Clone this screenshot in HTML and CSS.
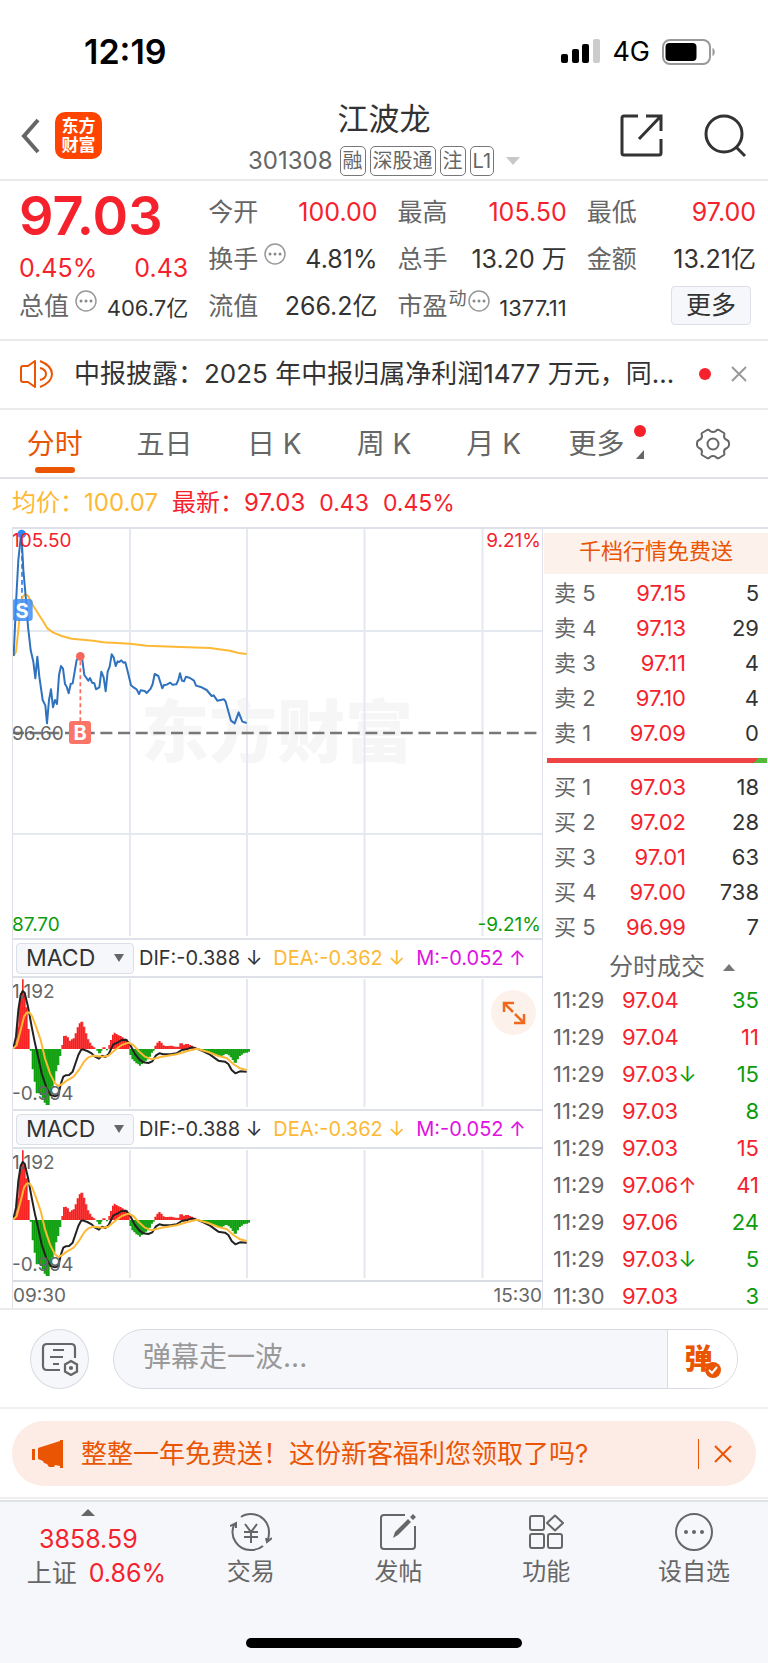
FILE: index.html
```html
<!DOCTYPE html>
<html lang="zh-CN">
<head>
<meta charset="utf-8">
<meta name="viewport" content="width=device-width, initial-scale=1">
<title>江波龙 301308</title>
<link rel="stylesheet" href="styles.css">
</head>
<body>
<div class="status">
  <time class="clock">12:19</time>
  <div class="signals">
    <svg width="39" height="25" viewBox="0 0 39 25" aria-hidden="true"><rect x="0" y="15" width="7" height="9" rx="2"/><rect x="11" y="10" width="7" height="14" rx="2"/><rect x="21" y="5" width="7" height="19" rx="2"/><rect x="32" y="0" width="7" height="24" rx="2" fill="#ccc"/></svg>
    <span class="network">4G</span>
    <svg width="54" height="26" viewBox="0 0 54 26" aria-hidden="true"><rect x="1" y="1" width="47" height="24" rx="7" fill="none" stroke="#999" stroke-width="2"/><rect x="3.500" y="4" width="31" height="18" rx="4"/><path d="M50.500 9c3 1 3 7 0 8z" fill="#999"/></svg>
  </div>
</div>

<header class="header">
  <div class="header-left">
    <button class="icon-button" type="button" aria-label="返回"><svg width="22" height="36" viewBox="0 0 22 36"><path d="M18 2 4 18l14 16" fill="none" stroke="#666" stroke-width="4"/></svg></button>
    <div class="logo"><span>东方</span><span>财富</span></div>
  </div>
  <div class="header-mid">
    <h1 class="title">江波龙</h1>
    <div class="code-row">
      <span class="code">301308</span>
      <span class="tag">融</span><span class="tag">深股通</span><span class="tag">注</span><span class="tag">L1</span>
      <svg class="code-arrow" width="14" height="8" viewBox="0 0 14 8"><path d="M0 0h14L7 8z" fill="#c8c8c8"/></svg>
    </div>
  </div>
  <div class="header-right">
    <button class="icon-button" type="button" aria-label="分享"><svg width="44" height="44" viewBox="0 0 44 44" fill="none" stroke="#333" stroke-width="3"><path d="M18 2H4Q2 2 2 4v35q0 2 2 2h35q2 0 2-2V25M26 2h15v15M40 3 19 25"/></svg></button>
    <button class="icon-button" type="button" aria-label="搜索"><svg width="44" height="44" viewBox="0 0 44 44" fill="none" stroke="#333" stroke-width="3"><circle cx="20" cy="20" r="18"/><path d="m32 33 9 9"/></svg></button>
  </div>
</header>

<section class="quote">
  <div class="price-cell">
    <strong class="price">97.03</strong>
    <div class="change"><span>0.45%</span><span>0.43</span></div>
  </div>
  <div class="stat"><span>今开</span><b class="red">100.00</b></div>
  <div class="stat"><span>最高</span><b class="red">105.50</b></div>
  <div class="stat"><span>最低</span><b class="red">97.00</b></div>
  <div class="stat"><span class="with-dots">换手<svg class="dots" viewBox="0 0 22 22"><circle cx="11" cy="11" r="10" fill="none" stroke="#999" stroke-width="1.500"/><g fill="#888"><circle cx="6" cy="11" r="1.500"/><circle cx="11" cy="11" r="1.500"/><circle cx="16" cy="11" r="1.500"/></g></svg></span><b>4.81%</b></div>
  <div class="stat"><span>总手</span><b>13.20 万</b></div>
  <div class="stat"><span>金额</span><b>13.21亿</b></div>
  <div class="stat"><span class="with-dots">总值<svg class="dots" viewBox="0 0 22 22"><circle cx="11" cy="11" r="10" fill="none" stroke="#999" stroke-width="1.500"/><g fill="#888"><circle cx="6" cy="11" r="1.500"/><circle cx="11" cy="11" r="1.500"/><circle cx="16" cy="11" r="1.500"/></g></svg></span><b class="small">406.7亿</b></div>
  <div class="stat"><span>流值</span><b>266.2亿</b></div>
  <div class="stat"><span class="with-dots tight">市盈<sup>动</sup><svg class="dots" viewBox="0 0 22 22"><circle cx="11" cy="11" r="10" fill="none" stroke="#999" stroke-width="1.500"/><g fill="#888"><circle cx="6" cy="11" r="1.500"/><circle cx="11" cy="11" r="1.500"/><circle cx="16" cy="11" r="1.500"/></g></svg></span><b class="small">1377.11</b></div>
  <div class="stat end"><button class="more" type="button">更多</button></div>
</section>

<section class="news">
  <svg width="34" height="28" viewBox="0 0 34 28" fill="none" stroke="#ea5504" stroke-width="2" stroke-linejoin="round" aria-hidden="true"><path d="M15 1v26l-7-5H3q-2 0-2-2V8q0-2 2-2h5zM20 1c5 2 12 6 12 13s-7 11-12 13M20 8c8 2 8 10 0 12"/></svg>
  <a class="news-text" href="#">中报披露：2025 年中报归属净利润1477 万元，同...</a>
  <span class="dot"></span>
  <button class="icon-button" type="button" aria-label="关闭"><svg width="18" height="18" viewBox="0 0 18 18"><path d="m2 2 14 14M16 2 2 16" stroke="#999" stroke-width="2"/></svg></button>
</section>

<nav class="tabs">
  <button class="tab active" type="button">分时</button>
  <button class="tab" type="button">五日</button>
  <button class="tab" type="button">日 K</button>
  <button class="tab" type="button">周 K</button>
  <button class="tab" type="button">月 K</button>
  <button class="tab more-tab" type="button">更多<span class="tab-mark"><i class="dot"></i><svg width="8" height="9" viewBox="0 0 8 9"><path d="M8 0v9H0z" fill="#666"/></svg></span></button>
  <button class="tab" type="button" aria-label="设置"><svg width="34" height="32" viewBox="0 0 34 32" fill="none" stroke="#666" stroke-width="2" stroke-linejoin="round"><path d="M11 2q2-1 3 1 3 2 6 0 1-2 3-1l5 3q1 1 0 3 0 3 3 4 2 1 2 3v2q0 2-2 3-3 1-3 4 1 2 0 3l-5 3q-2 1-3-1-3-2-6 0-1 2-3 1l-5-3q-1-1 0-3 0-3-3-4-2-1-2-3v-2q0-2 2-3 3-1 3-4-1-2 0-3z"/><circle cx="17" cy="16" r="5.500"/></svg></button>
</nav>

<div class="legend"><span class="gold">均价：100.07</span><span>最新：97.03</span><span>0.43</span><span>0.45%</span></div>

<main class="board">
  <section class="charts">
    <svg class="chart" viewBox="1 2 529 409" role="img" aria-label="分时走势">
      <text x="129" y="230" font-size="68" font-weight="900" fill="#f6f6f6">东方财富</text>
      <g stroke="#e4e8ef" stroke-width="2"><path d="M0 104h530M118 2v407M235 2v407M352.500 2v407M470.500 2v407M0 307h530"/></g>
      <path d="M0 206h530" stroke="#777" stroke-width="2.500" stroke-dasharray="12 5.670"/>
      <g transform="translate(-12 -7) scale(.33333)" fill="none" stroke-linejoin="round">
        <path d="M66 36V237" stroke="#4b93f5" stroke-width="6" stroke-dasharray="14 10"/>
        <path d="M41 408 48 395 55 330 62 260 68 230 75 223 83 226 100 258 130 305 142 325 160 338 185 348 215 356 280 362 310 367 390 371 440 377 520 380 630 384 690 392 715 399 740 402" stroke="#fdb935" stroke-width="6"/>
        <path d="M41 408 48 250 55 120 64 36 70 150 78 240 84 320 92 390 100 425 106 475 112 410 118 470 128 540 136 556 141 610 147 540 153 508 159 562 165 540 171 552 177 465 183 438 189 446 195 492 200 500 206 520 212 492 218 490 224 455 230 420 236 412 247 420 253 465 265 482 270 474 276 488 283 490 288 508 298 502 304 455 311 472 317 514 323 455 329 440 335 403 341 412 347 438 353 424 358 426 364 421 370 428 376 427 382 450 393 496 402 503 410 508 417 522 422 511 434 513 440 519 452 506 458 492 464 462 475 468 487 505 492 495 500 494 511 488 517 494 529 493 535 480 540 460 546 482 552 484 558 470 570 474 582 482 588 497 605 502 620 510 635 528 641 526 652 542 672 538 677 545 693 602 704 610 716 577 727 605 740 609" stroke="#2f72bd" stroke-width="6"/>
        <circle cx="65" cy="42" r="13" fill="#2f86f5"/>
        <path d="M241 424v180" stroke="#fb6a5a" stroke-width="5" stroke-dasharray="12 9"/>
        <circle cx="241" cy="409" r="13" fill="#f4675a"/>
        <rect x="37" y="237" width="61" height="66" rx="10" fill="#3c8df7" fill-opacity=".85"/>
      </g>
      <g font-size="19">
        <text x="0" y="20" fill="#f5222d">105.50</text>
        <text x="529" y="20" fill="#f5222d" text-anchor="end">9.21%</text>
        <text x="0" y="213" fill="#666">96.60</text>
        <text x="0" y="404" fill="#0c9c0c">87.70</text>
        <text x="529" y="404" fill="#0c9c0c" text-anchor="end">-9.21%</text>
      </g>
      <rect x="57" y="194" width="22" height="23" rx="3" fill="#fb7566"/>
      <g font-size="20" font-weight="700" fill="#fff" text-anchor="middle"><text x="10" y="91">S</text><text x="68" y="213">B</text></g>
    </svg>

    <div class="indicator">
      <span class="picker"><select class="picker-select" aria-label="指标一"><option>MACD</option></select><svg class="picker-arrow" viewBox="0 0 10 8"><path d="M0 0h10L5 8z" fill="#666"/></svg></span>
      <span>DIF:-0.388 ↓</span><span class="gold">DEA:-0.362 ↓</span><span class="magenta">M:-0.052 ↑</span>
    </div>
    <div class="plot">
      <svg class="chart" viewBox="1 2 529 131" role="img" aria-label="MACD">
        <defs>
          <pattern id="redBars" width="5.860" height="600" patternUnits="userSpaceOnUse" x="43.500"><rect width="5.860" height="600" fill="#ff7070"/><rect width="4.800" height="600" fill="#f71c1c"/></pattern>
          <pattern id="greenBars" width="5.860" height="600" patternUnits="userSpaceOnUse" x="43.500"><rect width="5.860" height="600" fill="#55bb55"/><rect width="4.800" height="600" fill="#0a9d0a"/></pattern>
          <g id="macd">
            <path d="M118 3v128M235 3v128M352.500 3v128M470.500 3v128" stroke="#e4e8ef" stroke-width="2"/>
            <g transform="translate(-12 -46) scale(.33333)" fill="none" stroke-linejoin="round">
              <path fill="url(#redBars)" d="M43 357V340h6V290h6V230h5V190h6V148h5V190h6V232h6V297h6V357zM184 357V345h5V318h6V317h6V322h6V332h6V328h5V325h6V310h6V292h6V280h5V275h9V290h6V310h6V328h6V338h6V347h6V352h6V357zM307 357V352h10V357zM325 357V345h5V330h6V314h5V308h6V312h6V316h6V318h6V322h6V326h6V328h6V340h6V357zM463 357V347h6V338h6V333h7V338h6V346h6V348h12V347h12V349h6V350h14V340h11V344h6V342h12V345h6V347h6V350h8V357z"/>
              <path fill="url(#greenBars)" d="M89 357V362h6V418h6V455h6V490h12V495h6V505h6V518h6V525h12V497h6V470h6V455h5V424h6V405h6V378h6V357zM289 357V362h5V370h10V362h3V357zM318 357v4h6v-4zM388 357V375h6V388h6V394h6V400h6V403h5V407h6V402h6V396h6V392h6V388h6V380h6V368h6V362h5V357zM590 357V360h12V362h12V365h12V369h12V374h12V378h12V380h6V376h6V372h9V376h6V382h6V390h6V398h10V388h6V378h6V374h6V370h6V368h9V365h6V357z"/>
              <path stroke="#222" stroke-width="6" d="M40 355 48 320 55 240 62 195 68 183 74 188 84 230 95 290 105 340 112 370 125 430 140 475 152 495 165 499 175 495 183 460 190 440 197 436 207 435 218 425 235 375 243 360 248 358 262 363 275 370 285 380 297 386 306 377 316 381 326 372 340 343 352 338 365 330 378 329 388 340 405 372 418 388 430 397 445 399 457 394 468 376 478 370 490 373 515 372 530 370 545 360 560 358 575 352 590 356 610 364 630 374 655 392 675 395 685 402 695 420 706 430 720 424 740 425"/>
              <path stroke="#fdb935" stroke-width="6" d="M40 355 50 345 62 300 72 260 80 248 88 247 96 258 108 290 122 330 135 385 150 430 165 460 175 468 187 462 200 452 220 441 238 418 252 395 265 382 280 377 310 380 325 377 345 360 365 345 385 338 400 345 415 362 435 380 455 388 485 380 530 373 560 364 590 356 625 366 655 378 680 384 700 402 720 415 740 420"/>
            </g>
            <g font-size="19" fill="#666"><text x="0" y="22">1.192</text><text x="0" y="124">-0.994</text></g>
          </g>
        </defs>
        <use href="#macd"/>
      </svg>
      <button class="expand" type="button" aria-label="全屏"><svg width="24" height="24" viewBox="0 0 24 24" fill="none" stroke="#ef6a1c" stroke-width="2.500"><path d="M2 11V2h10M2 2l9 9M22 13v9H12M22 22l-9-9"/></svg></button>
    </div>
    <div class="indicator">
      <span class="picker"><select class="picker-select" aria-label="指标二"><option>MACD</option></select><svg class="picker-arrow" viewBox="0 0 10 8"><path d="M0 0h10L5 8z" fill="#666"/></svg></span>
      <span>DIF:-0.388 ↓</span><span class="gold">DEA:-0.362 ↓</span><span class="magenta">M:-0.052 ↑</span>
    </div>
    <div class="plot">
      <svg class="chart" viewBox="1 2 529 131" role="img" aria-label="MACD"><use href="#macd"/></svg>
    </div>
    <div class="times"><span>09:30</span><span>15:30</span></div>
  </section>

  <aside class="depth">
    <a class="promo" href="#">千档行情免费送</a>
    <table class="orders">
      <tr><th>卖 5</th><td>97.15</td><td>5</td></tr>
      <tr><th>卖 4</th><td>97.13</td><td>29</td></tr>
      <tr><th>卖 3</th><td>97.11</td><td>4</td></tr>
      <tr><th>卖 2</th><td>97.10</td><td>4</td></tr>
      <tr><th>卖 1</th><td>97.09</td><td>0</td></tr>
    </table>
    <div class="ratio"></div>
    <table class="orders">
      <tr><th>买 1</th><td>97.03</td><td>18</td></tr>
      <tr><th>买 2</th><td>97.02</td><td>28</td></tr>
      <tr><th>买 3</th><td>97.01</td><td>63</td></tr>
      <tr><th>买 4</th><td>97.00</td><td>738</td></tr>
      <tr><th>买 5</th><td>96.99</td><td>7</td></tr>
    </table>
    <button class="ticks-title" type="button">分时成交<svg width="12" height="7" viewBox="0 0 12 7"><path d="M0 7h12L6 0z" fill="#777"/></svg></button>
    <table class="ticks">
      <tr><th>11:29</th><td>97.04</td><td class="green">35</td></tr>
      <tr><th>11:29</th><td>97.04</td><td>11</td></tr>
      <tr><th>11:29</th><td>97.03<span class="green">↓</span></td><td class="green">15</td></tr>
      <tr><th>11:29</th><td>97.03</td><td class="green">8</td></tr>
      <tr><th>11:29</th><td>97.03</td><td>15</td></tr>
      <tr><th>11:29</th><td>97.06↑</td><td>41</td></tr>
      <tr><th>11:29</th><td>97.06</td><td class="green">24</td></tr>
      <tr><th>11:29</th><td>97.03<span class="green">↓</span></td><td class="green">5</td></tr>
      <tr><th>11:30</th><td>97.03</td><td class="green">3</td></tr>
    </table>
  </aside>
</main>

<section class="chat">
  <button class="round" type="button" aria-label="弹幕设置"><svg width="38" height="34" viewBox="0 0 38 34" fill="none" stroke="#666" stroke-width="2.200"><path d="M19 28H6q-4 0-4-4V6q0-4 4-4h24q4 0 4 4v10M12 8h11M9 15h13M12 22h6"/><path d="m30 19 6 3.500v7L30 33l-6-3.500v-7z"/><circle cx="30" cy="26" r="1" /></svg></button>
  <div class="composer">
    <input class="message" type="text" placeholder="弹幕走一波..." aria-label="弹幕">
    <button class="barrage" type="button">弹<svg width="16" height="16" viewBox="0 0 16 16"><circle cx="8" cy="8" r="8" fill="#ea5504"/><path d="m4 8 3 3 5-6" fill="none" stroke="#fff" stroke-width="2"/></svg></button>
  </div>
</section>

<section class="offer-wrap">
  <div class="offer">
    <svg width="32" height="28" viewBox="0 0 32 28" fill="#ea5504" aria-hidden="true"><path d="M0 9h3v11H0zM6 8 28 1V0h3v28h-3v-2l-5-1-1 2h-5l-2-3-3-1-1-2-5-2z"/></svg>
    <a class="offer-text" href="#">整整一年免费送！这份新客福利您领取了吗?</a>
    <button class="offer-close" type="button" aria-label="关闭"><svg width="18" height="18" viewBox="0 0 18 18"><path d="m1 1 16 16M17 1 1 17" stroke="#ea5504" stroke-width="2"/></svg></button>
  </div>
</section>

<footer class="bottom">
  <nav class="dock">
    <a class="index" href="#"><svg width="14" height="7" viewBox="0 0 14 7"><path d="M0 7h14L7 0z" fill="#666"/></svg><span class="red">3858.59</span><span class="index-row">上证<b class="red">0.86%</b></span></a>
    <a class="dock-item" href="#"><svg width="42" height="38" viewBox="0 0 42 38" fill="none" stroke="#666" stroke-width="2"><path d="M11 4Q15 1 21 1a18 18 0 0 1 18 18q0 4-1 8l-1 2M42 25l-5 4-1-4M33 33q-5 4-12 4A18 18 0 0 1 4 12l1-1M0 13l6-3 0 5M15 11l6 8 6-8M14 19h14M14 24h14M21 19v11"/></svg><span>交易</span></a>
    <a class="dock-item" href="#"><svg width="38" height="38" viewBox="0 0 38 38" fill="none" stroke="#666" stroke-width="2"><path d="M26 2H5Q2 2 2 5v28q0 3 3 3h28q3 0 3-3V13"/><path d="m14 25 2-6L29 6l3 3-13 13zM31 4l3-3 3 3-3 3z" fill="#666" stroke="none"/></svg><span>发帖</span></a>
    <a class="dock-item" href="#"><svg width="36" height="36" viewBox="0 0 36 36" fill="none" stroke="#666" stroke-width="2"><rect x="2" y="2" width="14" height="14" rx="2"/><rect x="2" y="20" width="14" height="14" rx="2"/><rect x="20" y="20" width="14" height="14" rx="2"/><path d="M27 1.500 35 9l-8 7.500L19 9z" stroke-linejoin="round"/></svg><span>功能</span></a>
    <a class="dock-item" href="#"><svg width="38" height="38" viewBox="0 0 38 38" fill="none" stroke="#666" stroke-width="2"><circle cx="19" cy="19" r="18"/><g fill="#666" stroke="none"><circle cx="11" cy="19" r="2"/><circle cx="19" cy="19" r="2"/><circle cx="27" cy="19" r="2"/></g></svg><span>设自选</span></a>
  </nav>
  <div class="home"></div>
</footer>
</body>
</html>
```
FILE: styles.css
```css
* { box-sizing: border-box; }
body {
  margin: 0;
  background: #fff;
  color: #333;
  font-family: Inter, "Noto Sans CJK SC", sans-serif;
  font-size: 24px;
  line-height: 32px;
}
button, input, select { font: inherit; color: inherit; margin: 0; }
button { background: none; border: 0; padding: 0; }
a { color: inherit; text-decoration: none; }
b, th { font-weight: 400; }
svg { display: block; flex: none; }
table { border-collapse: collapse; width: 100%; table-layout: fixed; }
.red { color: #f5222d; }
.green { color: #0c9c0c; }
.gold { color: #fdb935; }
.magenta { color: #e012e0; }

.status {
  display: flex;
  justify-content: space-between;
  align-items: center;
  height: 100px;
  padding: 3px 52px 0 84px;
  color: #000;
}
.clock { font-size: 34px; font-weight: 600; }
.signals { display: flex; align-items: center; gap: 12px; }
.network { font-size: 27px; }

.header {
  display: grid;
  grid-template-columns: 1fr auto 1fr;
  height: 81px;
  padding: 0 20px;
  border-bottom: 2px solid #ebebeb;
}
.header-left, .header-right { display: flex; align-items: center; padding-bottom: 8px; }
.header-left { gap: 13px; }
.header-right { justify-content: flex-end; gap: 40px; }
.icon-button { flex: none; }
.logo {
  display: grid;
  align-content: center;
  justify-items: center;
  width: 47px;
  height: 47px;
  border-radius: 10px;
  background: #ff4400;
  color: #fff;
  font-size: 17px;
  font-weight: 700;
  line-height: 19px;
}
.header-mid { display: flex; flex-direction: column; align-items: center; }
.title { margin: 0; font-size: 31px; font-weight: 400; line-height: 38px; padding-bottom: 8px; }
.code-row { display: flex; align-items: center; gap: 4px; height: 30px; color: #666; font-size: 20px; }
.code { font-size: 24px; padding-right: 3px; }
.tag { border: 1px solid #777; border-radius: 5px; padding: 0 2px; line-height: 28px; }
.code-arrow { margin-left: 8px; }

.quote {
  display: grid;
  grid-template-columns: repeat(4, 1fr);
  grid-template-rows: repeat(3, 47px);
  column-gap: 20px;
  padding: 7px 12px 10px 19px;
  border-bottom: 2px solid #ebebeb;
}
.price-cell { grid-row: span 2; color: #f5222d; }
.price { display: block; font-size: 54px; font-weight: 600; line-height: 56px; }
.change { display: flex; justify-content: space-between; font-size: 25px; line-height: 48px; }
.stat { display: flex; align-items: center; justify-content: space-between; white-space: nowrap; color: #666; font-size: 25px; }
.stat b { color: #333; font-size: 25px; }
.stat b.red { color: #f5222d; }
.stat b.small { font-size: 22px; padding-top: 4px; }
.stat.end { justify-content: flex-end; padding-right: 5px; }
.with-dots { display: flex; gap: 6px; }
.with-dots.tight { gap: 1px; }
.with-dots sup { font-size: 18px; line-height: 18px; }
.dots { width: 22px; height: 22px; }
.more { height: 39px; padding: 0 14px; border: 1px solid #dcdfe8; border-radius: 4px; background: #f6f7fa; color: #333; line-height: 35px; }

.news {
  display: flex;
  align-items: center;
  height: 69px;
  padding: 0 20px 2px;
  border-bottom: 2px solid #ebebeb;
}
.news-text {
  flex: 1;
  min-width: 0;
  white-space: nowrap;
  margin: 0 18px 0 20px;
  font-size: 26px;
  line-height: 40px;
}
.dot { flex: none; width: 12px; height: 12px; border-radius: 50%; background: #f5222d; }
.news .icon-button { margin-left: 19px; }

.tabs {
  display: grid;
  grid-template-columns: repeat(7, 1fr);
  height: 69px;
  border-bottom: 2px solid #dfe1e6;
}
.tab { position: relative; display: flex; align-items: center; justify-content: center; color: #666; font-size: 28px; white-space: pre; }
.tab.active { color: #ea5504; }
.tab.active::after {
  content: "";
  position: absolute;
  bottom: 4px;
  left: calc(50% - 20px);
  width: 40px;
  height: 6px;
  border-radius: 3px;
  background: #ea5504;
}
.more-tab { padding-left: 8px; }
.tab-mark { display: grid; gap: 13px; justify-items: center; margin-left: 10px; padding-bottom: 4px; }

.legend { display: flex; gap: 14px; padding: 8px 12px; height: 48px; color: #f5222d; }
.legend span:nth-child(n+3) { font-size: 23px; }

.board {
  display: grid;
  grid-template-columns: minmax(0, 531fr) minmax(0, 225fr);
  padding-left: 12px;
  border-bottom: 2px solid #ebebeb;
}
.charts { border: 1px solid #dfe1e8; border-width: 2px 1px 0; }
.chart { width: 100%; height: auto; overflow: hidden; }
.chart text { font-family: Inter, "Noto Sans CJK SC", sans-serif; }
.indicator {
  display: flex;
  align-items: center;
  height: 40px;
  padding-left: 3px;
  border: 1px solid #dfe1e8;
  border-width: 2px 0;
  font-size: 20px;
  white-space: pre;
}
.indicator > span { padding-right: 11px; }
.indicator > .picker { position: relative; height: 31px; margin-right: 5px; padding: 0; }
.picker-select {
  display: block;
  appearance: none;
  width: 118px;
  height: 31px;
  padding: 0 9px;
  border: 1px solid #dcdfe8;
  border-radius: 4px;
  background: #f6f7fa;
  font-size: 23px;
  line-height: 28px;
}
.picker-arrow { position: absolute; right: 10px; top: 11px; width: 10px; height: 8px; pointer-events: none; }
.plot { position: relative; }
.expand {
  position: absolute;
  top: 12px;
  right: 6px;
  display: grid;
  place-items: center;
  width: 45px;
  height: 45px;
  border-radius: 50%;
  background: #fdf1eb;
}
.times { display: flex; justify-content: space-between; border-top: 2px solid #d8dbe2; height: 28px; font-size: 19px; line-height: 28px; color: #666; }

.depth { border-top: 2px solid #dfe1e8; padding: 4px 0 0 1px; min-width: 0; }
.promo { display: block; height: 41px; background: #fdf1eb; color: #ea5504; font-size: 22px; line-height: 36px; text-align: center; }
.orders, .ticks { font-size: 22px; line-height: 24px; }
.orders { margin-top: 1px; }
.orders tr { height: 35px; }
.orders th, .orders td { padding: 0; width: 71px; }
.orders th { padding-left: 10px; text-align: left; color: #666; }
.orders td { color: #f5222d; text-align: right; }
.orders td:last-child { width: auto; color: #333; padding-right: 9px; }
.ratio { height: 5px; margin: 8px 1px 6px 3px; background: linear-gradient(135deg, #ee4444 94%, #55b83a 94%); }
.ticks-title { display: flex; align-items: center; gap: 18px; height: 16px; margin: 15px 0 0 65px; font-size: 24px; line-height: 16px; color: #666; }
.ticks th, .ticks td { padding: 13px 0 0; height: 37px; text-align: left; color: #f5222d; }
.ticks th { width: 78px; padding-left: 9px; color: #666; }
.ticks td { width: 80px; }
.ticks td:last-child { width: auto; padding-right: 9px; text-align: right; }
.ticks td.green { color: #0c9c0c; }

.chat { display: flex; gap: 24px; padding: 19px 30px 18px; border-bottom: 2px solid #f0f0f0; }
.round { flex: none; display: grid; place-items: center; width: 59px; height: 60px; border: 1px solid #d8dbe2; border-radius: 50%; background: #f6f7fa; }
.composer { flex: 1; display: flex; min-width: 0; border: 1px solid #d8dbe2; border-radius: 30px; overflow: hidden; background: #f6f7fa; }
.message { flex: 1; min-width: 0; border: 0; padding: 0 29px 4px; background: none; font-size: 28px; }
.message::placeholder { color: #999; opacity: 1; }
.barrage { position: relative; width: 70px; border-left: 1px solid #d8dbe2; background: #fff; color: #ea5504; font-size: 28px; font-weight: 900; padding-right: 8px; }
.barrage svg { position: absolute; right: 16px; bottom: 10px; }

.offer-wrap { padding: 12px 12px 11px; border-bottom: 2px solid #eee; }
.offer { display: flex; align-items: center; height: 65px; padding: 0 24px 0 20px; border-radius: 32px; background: #fdece5; color: #ea5504; }
.offer-text { flex: 1; min-width: 0; padding-left: 17px; font-size: 26px; white-space: nowrap; }
.offer-close { border-left: 1px solid #ea5504; padding: 6px 0 6px 15px; }

.bottom { margin-top: 1px; border-top: 2px solid #dfe3e8; background: #f6f7fa; padding-bottom: 17px; }
.dock { display: grid; grid-template-columns: 177fr repeat(4, 148fr); height: 136px; color: #666; }
.index, .dock-item { display: flex; flex-direction: column; align-items: center; }
.index { padding-top: 7px; line-height: 34px; font-size: 25px; }
.index svg { margin-bottom: 6px; }
.index-row { display: flex; gap: 12px; padding-left: 16px; }
.dock-item { padding-top: 11px; }
.dock-item svg { height: 38px; margin-bottom: 5px; }
.home { width: 36%; height: 10px; margin: 0 auto; border-radius: 5px; background: #000; }
```
